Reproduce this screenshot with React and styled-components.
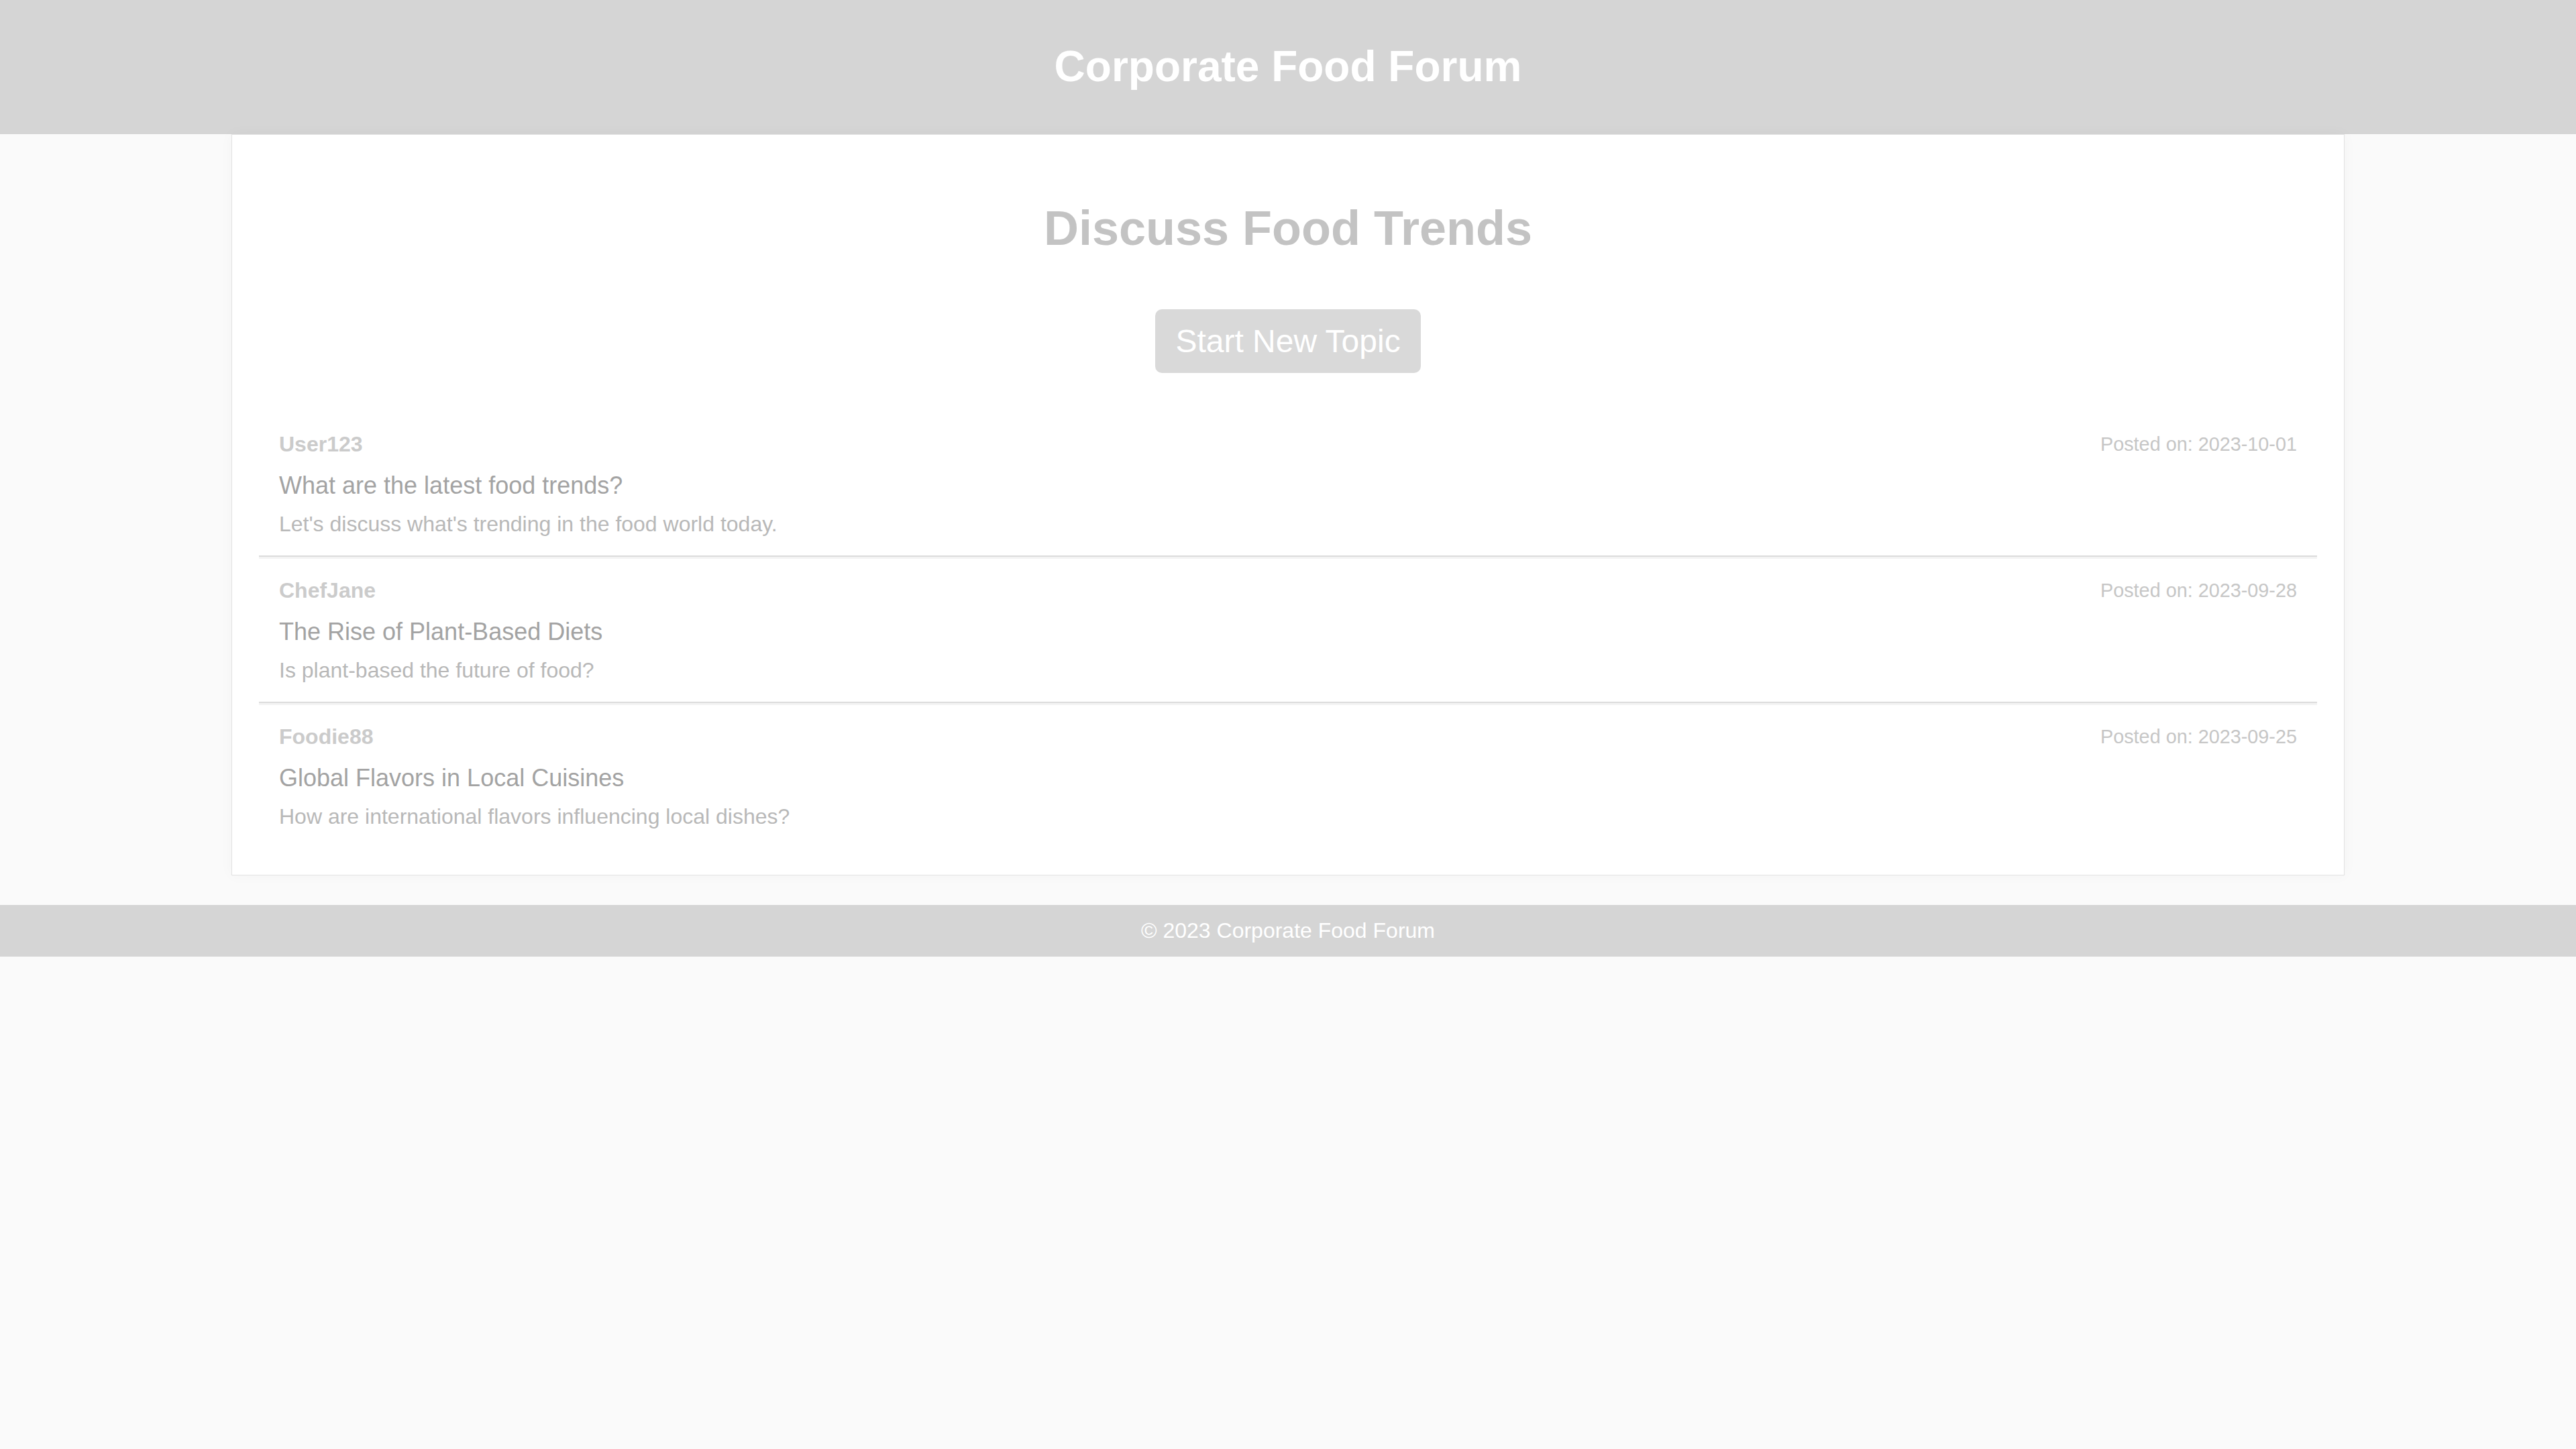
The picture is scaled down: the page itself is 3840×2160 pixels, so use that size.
import React from 'react'
import styled, { createGlobalStyle } from 'styled-components';

const GlobalStyle = createGlobalStyle`
  body {
    margin:0;
    background-color:#fafafa;
    font-family:"Liberation Sans", Arial, sans-serif;
  }
`

const Header = styled.header`
  background-color:#d5d5d5;
  padding:62px 0 64px;
  text-align:center;
`

const SiteTitle = styled.h1`
  margin:0;
  font-size:64px;
  font-weight:bold;
  color:#fff;
`

const Main = styled.main`
  max-width:3150px;
  margin:0 auto 44px;
  padding:40px;
  box-sizing:border-box;
  background-color:#fff;
  border:1px solid #e2e2e2;
  box-shadow:0 0 20px rgba(0,0,0,0.03);
  display:flex;
  flex-direction:column;
  align-items:center;
`

const Heading = styled.h2`
  margin:58px 0 80px;
  font-size:72px;
  font-weight:bold;
  color:#c3c3c3;
`

const NewTopic = styled.button`
  font-family:inherit;
  font-size:48px;
  color:#fff;
  background-color:#d9d9d9;
  border:none;
  border-radius:10px;
  padding:20px 30px;
  margin-bottom:56px;
  cursor:pointer;
`

const TopicList = styled.ul`
  list-style:none;
  margin:0;
  padding:0;
  align-self:stretch;
`

const Topic = styled.li`
  padding:32px 30px 28px;
  border-bottom:2px solid #dcdcdc;
  box-shadow:0 3px 0 #f3f3f3;
  &:last-child {
    border-bottom:none;
    box-shadow:none;
  }
`

const TopicMeta = styled.div`
  display:flex;
  justify-content:space-between;
  align-items:center;
`

const Author = styled.span`
  font-size:32px;
  font-weight:bold;
  color:#cbcbcb;
`

const PostDate = styled.span`
  font-size:28.8px;
  color:#c6c6c6;
`

const TopicTitle = styled.h3`
  margin:22px 0 18px;
  font-size:36px;
  font-weight:normal;
  color:#a3a3a3;
`

const TopicText = styled.p`
  margin:0;
  font-size:32px;
  color:#b8b8b8;
`

const Footer = styled.footer`
  background-color:#d5d5d5;
  color:#fff;
  text-align:center;
  font-size:32px;
  padding:20px 0;
`

const topics = [
  { author: 'User123', date: '2023-10-01', title: 'What are the latest food trends?', text: "Let's discuss what's trending in the food world today." },
  { author: 'ChefJane', date: '2023-09-28', title: 'The Rise of Plant-Based Diets', text: 'Is plant-based the future of food?' },
  { author: 'Foodie88', date: '2023-09-25', title: 'Global Flavors in Local Cuisines', text: 'How are international flavors influencing local dishes?' },
]

const App = () => {
  return (
    <>
      <GlobalStyle />
      <Header>
        <SiteTitle>Corporate Food Forum</SiteTitle>
      </Header>
      <Main>
        <Heading>Discuss Food Trends</Heading>
        <NewTopic>Start New Topic</NewTopic>
        <TopicList>
          {topics.map(t => (
            <Topic key={t.author}>
              <TopicMeta>
                <Author>{t.author}</Author>
                <PostDate>Posted on: {t.date}</PostDate>
              </TopicMeta>
              <TopicTitle>{t.title}</TopicTitle>
              <TopicText>{t.text}</TopicText>
            </Topic>
          ))}
        </TopicList>
      </Main>
      <Footer>© 2023 Corporate Food Forum</Footer>
    </>
  )
}
export default App;
